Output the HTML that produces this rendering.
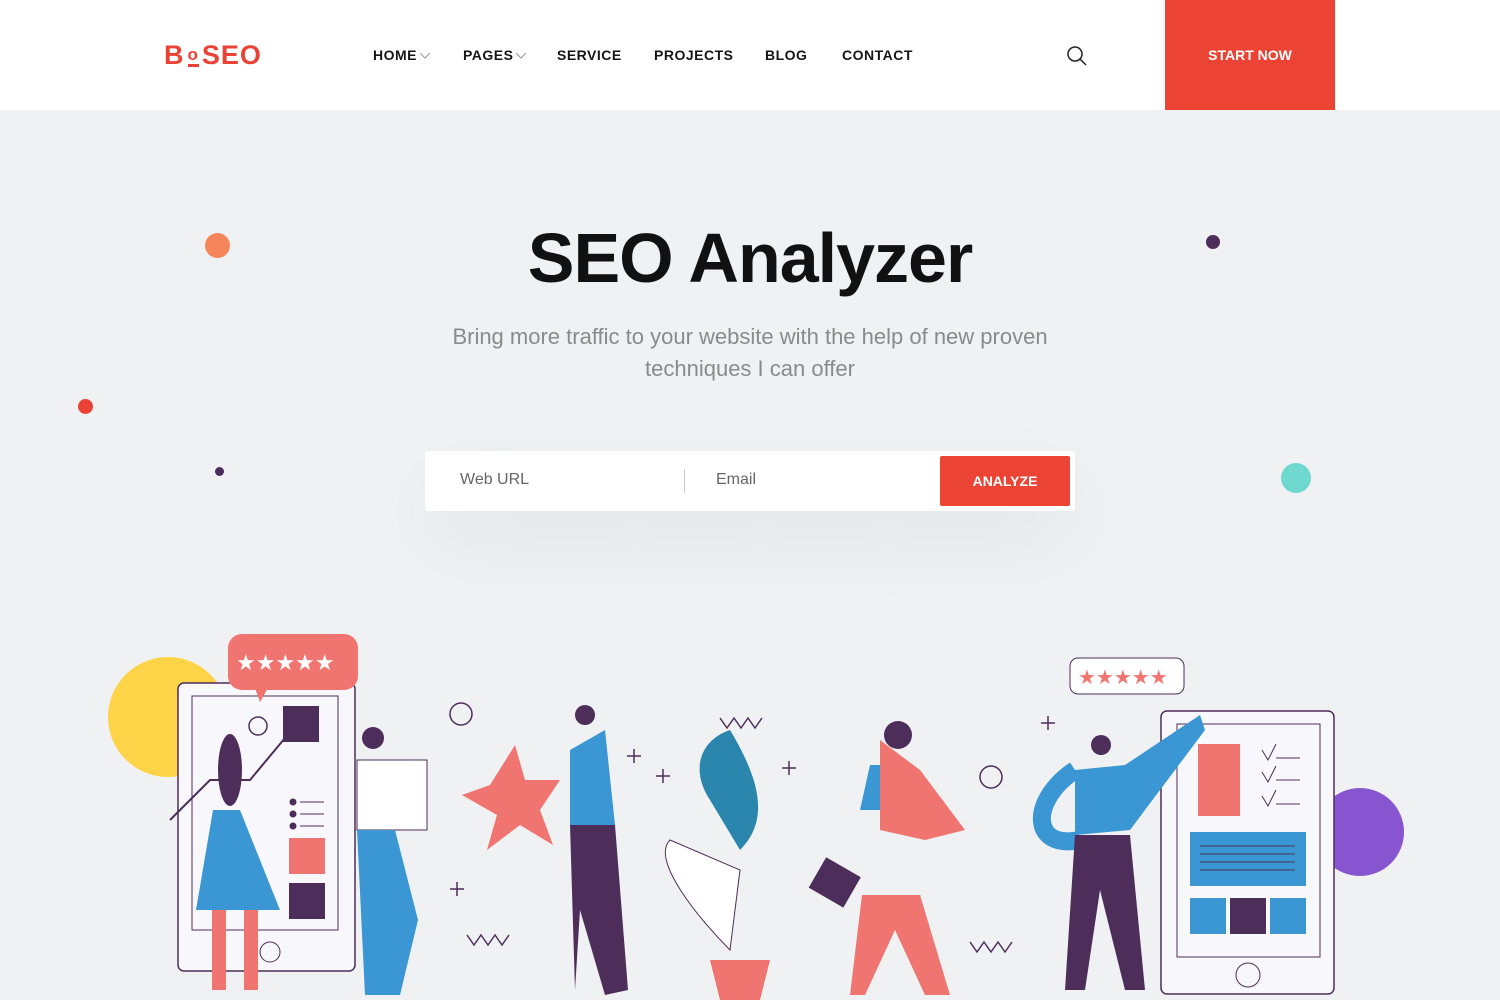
<!DOCTYPE html>
<html><head><meta charset="utf-8"><style>
*{margin:0;padding:0;box-sizing:border-box}
body{width:1500px;height:1000px;overflow:hidden;background:#f0f1f3;font-family:"Liberation Sans",sans-serif;position:relative}
.hdr{position:absolute;left:0;top:0;width:1500px;height:110px;background:#fff}
.logo{position:absolute;left:164px;top:40px;font-weight:bold;font-size:27px;color:#ea4335;letter-spacing:1px}
.nav{position:absolute;top:47px;font-size:14px;font-weight:bold;color:#151515;letter-spacing:.5px}
.nav svg{margin-left:3px;vertical-align:middle}
.start{position:absolute;left:1165px;top:0;width:170px;height:110px;background:#ec4434;color:#fff;font-weight:bold;font-size:14px;text-align:center;line-height:110px}
h1{position:absolute;left:0;width:1500px;top:218px;text-align:center;font-size:70px;color:#111;font-weight:bold;letter-spacing:-1px}
.sub{position:absolute;left:0;width:1500px;top:321px;text-align:center;font-size:22px;color:#8a8a8a;line-height:32px}
.form{position:absolute;left:425px;top:451px;width:650px;height:60px;background:#fff;border-radius:3px;box-shadow:0 30px 80px rgba(0,0,0,.06)}
.form span{position:absolute;top:20px;font-size:16px;color:#666}
.btn{position:absolute;left:515px;top:5px;width:130px;height:50px;background:#ec4434;color:#fff;font-weight:bold;font-size:14px;text-align:center;line-height:50px;border-radius:2px}
.dot{position:absolute;border-radius:50%}
</style></head><body>
<div class="hdr"></div>
<div class="logo">B<span style="font-size:17px;position:relative;top:-4px;border-bottom:3px solid #ea4335;margin:0 3px">o</span>SEO</div>
<div class="nav" style="left:373px">HOME<svg width="10" height="6"><path d="M0 0l5 5l5-5" stroke="#999" fill="none"/></svg></div>
<div class="nav" style="left:463px">PAGES<svg width="10" height="6"><path d="M0 0l5 5l5-5" stroke="#999" fill="none"/></svg></div>
<div class="nav" style="left:557px">SERVICE</div>
<div class="nav" style="left:654px">PROJECTS</div>
<div class="nav" style="left:765px">BLOG</div>
<div class="nav" style="left:842px">CONTACT</div>
<svg style="position:absolute;left:1066px;top:45px" width="22" height="22"><circle cx="9" cy="9" r="7" fill="none" stroke="#222" stroke-width="1.5"/><line x1="14" y1="14" x2="20" y2="20" stroke="#222" stroke-width="1.5"/></svg>
<div class="start">START NOW</div>
<h1>SEO Analyzer</h1>
<div class="sub">Bring more traffic to your website with the help of new proven<br>techniques I can offer</div>
<div class="dot" style="left:205px;top:233px;width:25px;height:25px;background:#f6865a"></div>
<div class="dot" style="left:1206px;top:235px;width:14px;height:14px;background:#4d2d5a"></div>
<div class="dot" style="left:78px;top:399px;width:15px;height:15px;background:#ea4335"></div>
<div class="dot" style="left:215px;top:467px;width:9px;height:9px;background:#4d2d5a"></div>
<div class="dot" style="left:1281px;top:463px;width:30px;height:30px;background:#6fd9cf"></div>
<div class="form"><span style="left:35px">Web URL</span><div style="position:absolute;left:259px;top:18px;width:1px;height:24px;background:#ccc"></div><span style="left:291px">Email</span><div class="btn">ANALYZE</div></div>
<svg style="position:absolute;left:0;top:620px" width="1500" height="380" fill="none">
<circle cx="168" cy="97" r="60" fill="#fdd447"/>
<circle cx="1360" cy="212" r="44" fill="#8855d0"/>
<rect x="178" y="63" width="177" height="288" rx="6" fill="#f8f7fb" stroke="#4d2d5a" stroke-width="1.5"/>
<rect x="192" y="76" width="146" height="234" fill="none" stroke="#4d2d5a"/>
<rect x="228" y="14" width="130" height="56" rx="14" fill="#f07470"/>
<path d="M255 68l5 14l8-14z" fill="#f07470"/>
<text x="236" y="50" font-size="22" fill="#fff">★★★★★</text>
<rect x="283" y="86" width="36" height="36" fill="#4d2d5a"/>
<g stroke="#4d2d5a"><circle cx="293" cy="182" r="3" fill="#4d2d5a"/><circle cx="293" cy="194" r="3" fill="#4d2d5a"/><circle cx="293" cy="206" r="3" fill="#4d2d5a"/><path d="M300 182h24M300 194h24M300 206h24"/></g>
<rect x="289" y="218" width="36" height="36" fill="#f07470"/><rect x="289" y="263" width="36" height="36" fill="#4d2d5a"/>
<path d="M213 190 L240 190 L280 290 L196 290 Z" fill="#3a97d3"/>
<rect x="212" y="290" width="14" height="80" fill="#f07470"/><rect x="244" y="290" width="14" height="80" fill="#f07470"/>
<ellipse cx="230" cy="150" rx="12" ry="36" fill="#4d2d5a"/>
<path d="M170 200 L210 160 L250 160 L300 100" stroke="#4d2d5a" stroke-width="2"/>
<rect x="357" y="140" width="70" height="70" fill="#fff" stroke="#4d2d5a"/>
<circle cx="373" cy="118" r="11" fill="#4d2d5a"/>
<path d="M357 210 L395 210 L418 300 L400 375 L365 375 Z" fill="#3a97d3"/>
<path d="M490 165 L515 125 L525 160 L560 160 L540 190 L553 225 L520 205 L487 230 L497 195 L462 175 Z" fill="#f07470"/>
<path d="M570 130 L605 110 L615 205 L570 205 Z" fill="#3a97d3"/>
<path d="M570 205 L615 205 L628 370 L605 375 L580 290 L575 370 Z" fill="#4d2d5a"/>
<circle cx="585" cy="95" r="10" fill="#4d2d5a"/>
<path d="M710 180 C690 150 700 120 730 110 C760 160 770 200 740 230 Z" fill="#2a86ad"/>
<path d="M670 220 C650 240 700 300 730 330 L740 250 Z" fill="#fff" stroke="#4d2d5a"/>
<path d="M710 340 L770 340 L760 380 L720 380 Z" fill="#f07470"/>
<path d="M870 145 L910 145 L920 190 L860 190 Z" fill="#3a97d3"/>
<path d="M880 120 L920 150 L965 210 L925 220 L880 210 Z" fill="#f07470"/>
<path d="M862 275 L920 275 L950 375 L925 375 L895 310 L865 375 L850 375 Z" fill="#f07470"/>
<rect x="815" y="245" width="40" height="35" fill="#4d2d5a" transform="rotate(30 835 262)"/>
<circle cx="898" cy="115" r="14" fill="#4d2d5a"/>
<rect x="1070" y="38" width="114" height="36" rx="8" fill="#fff" stroke="#4d2d5a"/>
<text x="1078" y="64" font-size="20" fill="#f07470">★★★★★</text>
<rect x="1161" y="91" width="173" height="283" rx="6" fill="#f8f7fb" stroke="#4d2d5a" stroke-width="1.5"/>
<rect x="1177" y="104" width="143" height="233" fill="none" stroke="#4d2d5a"/>
<rect x="1198" y="124" width="42" height="72" fill="#f07470"/>
<g stroke="#4d2d5a"><path d="M1262 130l6 10l8-16M1276 138h24M1262 152l6 10l8-16M1276 160h24M1262 176l6 10l8-16M1276 184h24"/></g>
<rect x="1190" y="212" width="116" height="54" fill="#3a97d3"/>
<g stroke="#4d2d5a"><path d="M1200 226h95M1200 234h95M1200 242h95M1200 250h95"/></g>
<rect x="1190" y="278" width="36" height="36" fill="#3a97d3"/><rect x="1230" y="278" width="36" height="36" fill="#4d2d5a"/><rect x="1270" y="278" width="36" height="36" fill="#3a97d3"/>
<circle cx="1248" cy="355" r="12" stroke="#4d2d5a"/>
<circle cx="270" cy="332" r="10" stroke="#4d2d5a"/>
<path d="M1075 150 L1125 145 L1200 95 L1205 110 L1130 210 L1075 215 Z" fill="#3a97d3"/>
<path d="M1075 150 C1030 180 1030 230 1080 220" stroke="#3a97d3" stroke-width="18"/>
<path d="M1075 215 L1130 215 L1145 370 L1125 370 L1100 270 L1085 370 L1065 370 Z" fill="#4d2d5a"/>
<circle cx="1101" cy="125" r="10" fill="#4d2d5a"/>
<g stroke="#4d2d5a" stroke-width="1.5"><path d="M720 98 l7 10 l7 -10 l7 10 l7 -10 l7 10 l7 -10"/><path d="M467 315 l7 10 l7 -10 l7 10 l7 -10 l7 10 l7 -10"/><path d="M970 322 l7 10 l7 -10 l7 10 l7 -10 l7 10 l7 -10"/><path d="M634 129v14M627 136h14M663 149v14M656 156h14M789 141v14M782 148h14M457 262v14M450 269h14M1048 96v14M1041 103h14"/><circle cx="258" cy="106" r="9"/><circle cx="461" cy="94" r="11"/><circle cx="991" cy="157" r="11"/></g>
</svg>
</body></html>
